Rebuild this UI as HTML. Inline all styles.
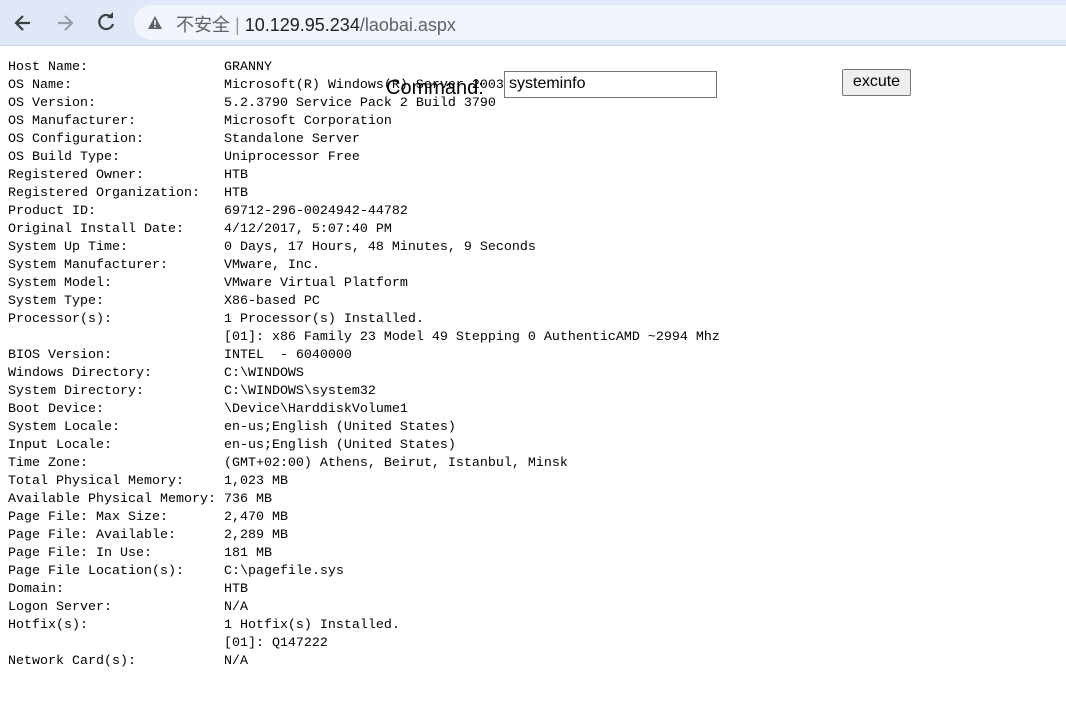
<!DOCTYPE html>
<html><head><meta charset="utf-8"><style>
body{margin:0;width:1066px;height:722px;overflow:hidden;background:#fff;position:relative;font-family:"Liberation Sans",sans-serif}
.bar{position:absolute;left:0;top:0;width:1066px;height:45px;background:#dfe8f7;border-bottom:1px solid #c9d4e6}
.pill{position:absolute;left:134px;top:5px;width:960px;height:35px;border-radius:18px;background:#f1f5fc}
.url{position:absolute;left:176px;top:11px;font-size:18px;color:#5f6368;font-family:"Liberation Sans","Noto Sans CJK SC",sans-serif}
.url b{font-weight:normal;color:#202124}
pre{position:absolute;left:8px;top:59px;margin:0;font-family:"Liberation Mono",monospace;font-size:13.33px;line-height:18px;color:#000}
.cmd{position:absolute;left:386px;top:77px;font-size:20px;color:#000}
.inp{position:absolute;left:504px;top:71px;width:213px;height:27px;border:1px solid #767676;box-sizing:border-box;font-size:16px;padding:3px 4px;background:#fff}
.btn{position:absolute;left:842px;top:69px;width:69px;height:27px;border:1px solid #767676;border-radius:2px;background:#efefef;box-sizing:border-box;font-size:16px;text-align:center;line-height:23px}
</style></head><body>
<div class="bar">
<svg style="position:absolute;left:12px;top:12px" width="22" height="22" viewBox="0 0 22 22"><path d="M18 11H5M11 4L4 11l7 7" stroke="#3c4043" stroke-width="2.2" fill="none"/></svg>
<svg style="position:absolute;left:54px;top:12px" width="22" height="22" viewBox="0 0 22 22"><path d="M4 11h13M11 4l7 7-7 7" stroke="#9aa0a6" stroke-width="2.2" fill="none"/></svg>
<svg style="position:absolute;left:95px;top:11px" width="22" height="22" viewBox="0 0 22 22"><path d="M17 7A7 7 0 1 0 18 13" stroke="#3c4043" stroke-width="2.2" fill="none"/><path d="M12 7h6V1z" fill="#3c4043"/></svg>
<div class="pill"></div>
<svg style="position:absolute;left:147px;top:15px" width="16" height="15" viewBox="0 0 16 15"><path d="M8 1L15 14H1z" fill="#5f6368"/><rect x="7.2" y="5" width="1.6" height="5" fill="#f1f5fc"/><rect x="7.2" y="11" width="1.6" height="1.6" fill="#f1f5fc"/></svg>
<div class="url">不安全 <span style="color:#999">|</span> <b>10.129.95.234</b>/laobai.aspx</div>
</div>
<pre>Host Name:                 GRANNY
OS Name:                   Microsoft(R) Windows(R) Server 2003
OS Version:                5.2.3790 Service Pack 2 Build 3790
OS Manufacturer:           Microsoft Corporation
OS Configuration:          Standalone Server
OS Build Type:             Uniprocessor Free
Registered Owner:          HTB
Registered Organization:   HTB
Product ID:                69712-296-0024942-44782
Original Install Date:     4/12/2017, 5:07:40 PM
System Up Time:            0 Days, 17 Hours, 48 Minutes, 9 Seconds
System Manufacturer:       VMware, Inc.
System Model:              VMware Virtual Platform
System Type:               X86-based PC
Processor(s):              1 Processor(s) Installed.
                           [01]: x86 Family 23 Model 49 Stepping 0 AuthenticAMD ~2994 Mhz
BIOS Version:              INTEL  - 6040000
Windows Directory:         C:\WINDOWS
System Directory:          C:\WINDOWS\system32
Boot Device:               \Device\HarddiskVolume1
System Locale:             en-us;English (United States)
Input Locale:              en-us;English (United States)
Time Zone:                 (GMT+02:00) Athens, Beirut, Istanbul, Minsk
Total Physical Memory:     1,023 MB
Available Physical Memory: 736 MB
Page File: Max Size:       2,470 MB
Page File: Available:      2,289 MB
Page File: In Use:         181 MB
Page File Location(s):     C:\pagefile.sys
Domain:                    HTB
Logon Server:              N/A
Hotfix(s):                 1 Hotfix(s) Installed.
                           [01]: Q147222
Network Card(s):           N/A</pre>
<div class="cmd">Command:</div>
<div class="inp">systeminfo</div>
<div class="btn">excute</div>
</body></html>
